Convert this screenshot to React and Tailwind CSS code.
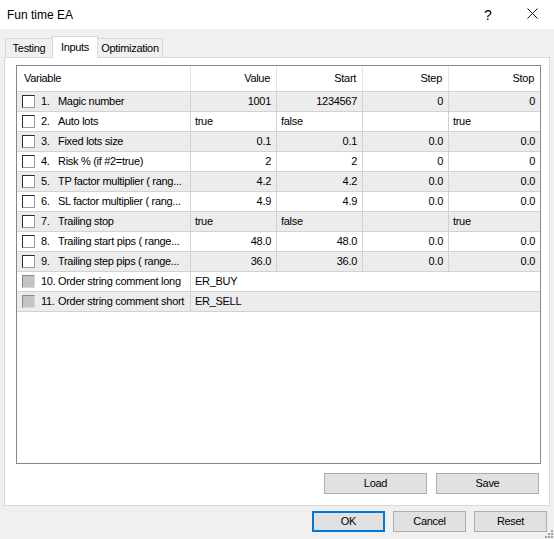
const ROWS = [
  { n: '1.', name: 'Magic number', v: ['1001', '1234567', '0', '0'] },
  { n: '2.', name: 'Auto lots', v: ['true', 'false', '', 'true'], left: true },
  { n: '3.', name: 'Fixed lots size', v: ['0.1', '0.1', '0.0', '0.0'] },
  { n: '4.', name: 'Risk % (if #2=true)', v: ['2', '2', '0', '0'] },
  { n: '5.', name: 'TP factor multiplier ( rang...', v: ['4.2', '4.2', '0.0', '0.0'] },
  { n: '6.', name: 'SL factor multiplier ( rang...', v: ['4.9', '4.9', '0.0', '0.0'] },
  { n: '7.', name: 'Trailing stop', v: ['true', 'false', '', 'true'], left: true },
  { n: '8.', name: 'Trailing start pips ( range...', v: ['48.0', '48.0', '0.0', '0.0'] },
  { n: '9.', name: 'Trailing step pips ( range...', v: ['36.0', '36.0', '0.0', '0.0'] },
  { n: '10.', name: 'Order string comment long', text: 'ER_BUY', disabled: true },
  { n: '11.', name: 'Order string comment short', text: 'ER_SELL', disabled: true },
]

const COL_W = ['w-[86px]', 'w-[86px]', 'w-[86px]', 'flex-1']

function Checkbox({ disabled }) {
  return (
    <span
      className={
        disabled
          ? 'w-[13px] h-[13px] shrink-0 bg-[#c4c4c4] border border-[#8a8a8a] border-r-[#d8d8d8] border-b-[#d8d8d8]'
          : 'w-[13px] h-[13px] shrink-0 bg-white border border-[#2b2b2b] border-r-[#9a9a9a] border-b-[#9a9a9a]'
      }
    />
  )
}

function Button({ children, w, primary }) {
  return (
    <div
      className={`${w} h-[21px] flex items-center justify-center bg-[#e1e1e1] ${
        primary ? 'border-2 border-[#0078d7]' : 'border border-[#adadad]'
      }`}
    >
      {children}
    </div>
  )
}

export default function App() {
  return (
    <div
      className="relative w-[554px] h-[539px] bg-[#f0f0f0] text-black text-[11px] tracking-[-0.3px] overflow-hidden"
      style={{ fontFamily: '"Liberation Sans", Arial, sans-serif' }}
    >
      {/* title bar */}
      <div className="h-[29px] bg-white flex items-center pl-[7px] relative">
        <span className="text-[12px] tracking-normal">Fun time EA</span>
        <span className="absolute left-[484px] top-[5px] text-[14px] tracking-normal">?</span>
        <svg className="absolute left-[527px] top-[8px]" width="11" height="11" viewBox="0 0 11 11">
          <path d="M0.5 0.5 L10.5 10.5 M10.5 0.5 L0.5 10.5" stroke="#111" strokeWidth="1" />
        </svg>
      </div>

      {/* tabs */}
      <div className="pt-[7px] px-[4px]">
        <div className="h-[21px] flex items-end pl-[1px]">
          <div className="w-[48px] h-[19px] flex items-center justify-center border border-b-0 border-[#d9d9d9] bg-[#f0f0f0]">
            Testing
          </div>
          <div className="relative z-10 -ml-px -mb-px w-[46px] h-[22px] flex items-center justify-center border border-b-0 border-[#d9d9d9] bg-white">
            Inputs
          </div>
          <div className="-ml-px w-[66px] h-[19px] flex items-center justify-center border border-b-0 border-[#d9d9d9] bg-[#f0f0f0]">
            Optimization
          </div>
        </div>

        <div className="h-[449px] border border-[#d9d9d9] bg-white flex flex-col">
          {/* list */}
          <div className="mt-[7px] ml-[11px] w-[525px] h-[399px] border border-[#828790] flex flex-col">
            <div className="h-[26px] flex border-b border-[#d2d2d2]">
              <div className="w-[174px] flex items-center pl-[7px] border-r border-[#e5e5e5]">Variable</div>
              {['Value', 'Start', 'Step', 'Stop'].map((h, i) => (
                <div
                  key={h}
                  className={`${COL_W[i]} flex items-center justify-end pr-[6px] ${i < 3 ? 'border-r border-[#e5e5e5]' : ''}`}
                >
                  {h}
                </div>
              ))}
            </div>
            {ROWS.map((r, idx) => (
              <div
                key={r.n}
                className={`h-[20px] flex border-b border-[#d2d2d2] ${idx % 2 === 0 ? 'bg-[#ececec]' : 'bg-white'}`}
              >
                <div className="w-[174px] flex items-center pl-[5px] border-r border-[#d2d2d2] whitespace-nowrap overflow-hidden">
                  <Checkbox disabled={r.disabled} />
                  <span className="w-[17px] ml-[6px] shrink-0">{r.n}</span>
                  <span>{r.name}</span>
                </div>
                {r.text ? (
                  <div className="flex-1 flex items-center pl-[4px]">{r.text}</div>
                ) : (
                  r.v.map((v, i) => (
                    <div
                      key={i}
                      className={`${COL_W[i]} flex items-center ${
                        r.left ? 'justify-start pl-[4px]' : 'justify-end pr-[5px]'
                      } ${i < 3 ? 'border-r border-[#d2d2d2]' : ''}`}
                    >
                      {v}
                    </div>
                  ))
                )}
              </div>
            ))}
          </div>

          <div className="mt-[9px] flex justify-end gap-[9px] pr-[10px]">
            <Button w="w-[103px]">Load</Button>
            <Button w="w-[103px]">Save</Button>
          </div>
        </div>
      </div>

      {/* dialog buttons */}
      <div className="mt-[5px] flex justify-end gap-[8px] pr-[7px]">
        <Button w="w-[73px]" primary>
          OK
        </Button>
        <Button w="w-[73px]">Cancel</Button>
        <Button w="w-[73px]">Reset</Button>
      </div>

      {/* resize grip */}
      <svg className="absolute right-[1px] bottom-[1px]" width="9" height="9" viewBox="0 0 9 9">
        <g fill="#a0a0a0">
          <rect x="7" y="1" width="2" height="2" />
          <rect x="4" y="4" width="2" height="2" />
          <rect x="7" y="4" width="2" height="2" />
          <rect x="1" y="7" width="2" height="2" />
          <rect x="4" y="7" width="2" height="2" />
          <rect x="7" y="7" width="2" height="2" />
        </g>
      </svg>
    </div>
  )
}
